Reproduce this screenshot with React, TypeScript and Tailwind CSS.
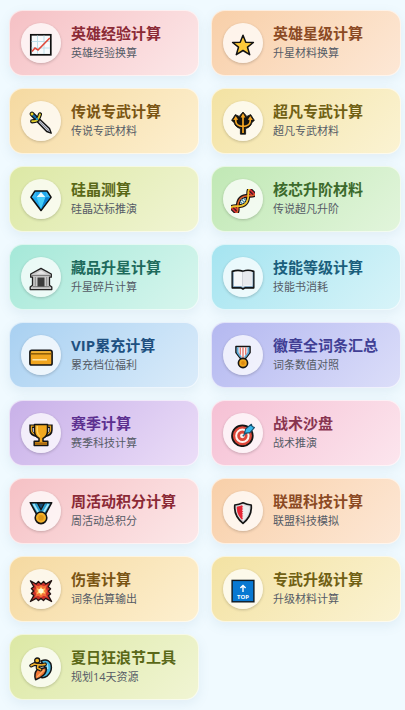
import type { ReactNode } from 'react';

const icons: Record<string, ReactNode> = {
  chart: (
    <>
      <rect x="1.8" y="1.8" width="20" height="20" fill="#f8fafc" stroke="#111" strokeWidth="1.7" />
      <path d="M8.5 2.6V21M15 2.6V21M2.6 8.5H21M2.6 15H21" stroke="#bfe0ea" strokeWidth="1" fill="none" />
      <path d="M3 18.5L6 15L9 17L20.8 5" stroke="#e0483a" strokeWidth="1.6" fill="none" />
    </>
  ),
  star: (
    <path
      d="M12 2.2L14.8 9.2L22.4 9.5L16.5 14.2L18.7 21.7L12 17.5L5.3 21.7L7.5 14.2L1.6 9.5L9.2 9.2Z"
      fill="#fcc93a" stroke="#111" strokeWidth="1.5" strokeLinejoin="round"
    />
  ),
  dagger: (
    <>
      <path d="M8 10.5L10.5 8L20.5 17.5L22.2 22.2L17.7 20.5Z" fill="#c9ccd6" stroke="#111" strokeWidth="1.4" strokeLinejoin="round" />
      <path d="M10 10.2L21 21" stroke="#898d9a" strokeWidth="1" />
      <path d="M3 3L8.5 8.5" stroke="#111" strokeWidth="4.6" strokeLinecap="round" />
      <path d="M4 4L8 8" stroke="#146aa8" strokeWidth="2.4" />
      <circle cx="3" cy="3" r="1.5" fill="#e9d52b" />
      <path d="M3.2 10.3Q8.3 10 8.5 8.3Q10 7 11 3.3" stroke="#111" strokeWidth="4.2" strokeLinecap="round" fill="none" />
      <path d="M3.2 10.3Q8.3 10 8.5 8.3Q10 7 11 3.3" stroke="#e3cf2b" strokeWidth="1.9" strokeLinecap="round" fill="none" />
      <circle cx="8" cy="8" r="1.3" fill="#2499c5" />
    </>
  ),
  trident: (
    <>
      <path
        d="M12 1L15.8 5.4L19.7 3.6L23.4 9.4L21 11.4Q20 16 14.6 17.6V23.2H9.4V17.6Q4 16 3 11.4L.6 9.4L4.3 3.6L8.2 5.4Z"
        fill="#151411" stroke="#151411" strokeWidth=".8" strokeLinejoin="round"
      />
      <path d="M12 5V22M4.8 8V10.5Q5.4 15 12 15.5Q18.6 15 19.2 10.5V8" fill="none" stroke="#f5a623" strokeWidth="1.7" />
      <path d="M12 2.2L14.4 6.4H9.6ZM4.7 5L7.2 8.8L2.2 9ZM19.3 5L21.8 9L16.8 8.8Z" fill="#f5a623" />
    </>
  ),
  diamond: (
    <>
      <path d="M6 2H18L22 8.2L12 21.5L2 8.2Z" fill="#20a9ee" stroke="#111" strokeWidth="1.6" strokeLinejoin="round" />
      <path d="M6.5 2.8L7.5 8.3L2.8 8.4ZM17.5 2.8L16.5 8.3L21.2 8.4Z" fill="#3ab9f3" />
      <path d="M12 2.9L16.5 8.3H7.5Z" fill="#e9faff" />
      <path d="M7.5 8.3H16.5L12 20Z" fill="#45cdf7" />
      <path d="M16.5 8.3H21L12 20.2Z" fill="#0b81cf" />
    </>
  ),
  dna: (
    <g transform="rotate(-45 12 12)" fill="none" strokeLinecap="round">
      <path
        d="M-1 8C3 8 5 15.6 12 15.6S21 8 25 8M-1 16C3 16 5 8.4 12 8.4S21 16 25 16M-1 8V16M25 8V16"
        stroke="#1a1414" strokeWidth="4"
      />
      <path d="M-1 8.5V15.5M1.8 9.6V14.4M25 8.5V15.5M22.2 9.6V14.4" stroke="#cf2f36" strokeWidth="1.8" />
      <path d="M9.6 9.5V14.5M12 9.2V14.8M14.4 9.5V14.5" stroke="#3f7fa3" strokeWidth="1.1" />
      <path d="M-1 16C3 16 5 8.4 12 8.4S21 16 25 16" stroke="#e2612c" strokeWidth="1.5" />
      <path d="M-1 8C3 8 5 15.6 12 15.6S21 8 25 8" stroke="#f3c52b" strokeWidth="1.8" />
    </g>
  ),
  museum: (
    <>
      <path
        d="M12 1.4L22.3 7V10.2H20.5V18.2L22.8 20V22.6H1.2V20L3.5 18.2V10.2H1.7V7Z"
        fill="#cacaca" stroke="#222" strokeWidth="1.3" strokeLinejoin="round"
      />
      <path d="M2.6 8.6H21.4M3.6 19.7H20.5" stroke="#777" strokeWidth="1" />
      <path d="M6.3 10V18.8M17.7 10V18.8" stroke="#8a8a8a" strokeWidth="1" />
      <path d="M8.5 10.5H15.5V19.5H8.5Z" fill="#3d3d3d" />
      <path d="M12 3.8L17 6.8H7Z" fill="#e9e9e9" />
    </>
  ),
  book: (
    <>
      <path
        d="M1.3 4.4Q7 2.4 12 4.3Q17 2.4 22.7 4.4V20.8H14L12 22L10 20.8H1.3Z"
        fill="#f4f6f8" stroke="#111" strokeWidth="1.7" strokeLinejoin="round"
      />
      <path d="M2.1 5V19.6H10L12 20.7L14 19.6H21.9V5" fill="none" stroke="#4a7ea6" strokeWidth=".7" />
      <path d="M12 4.8V19.4" stroke="#b8bdc5" strokeWidth="1.2" />
      <path d="M12 5Q17 3.4 21.4 5V18.6Q16 17.4 12 19Z" fill="#e7e9ed" />
    </>
  ),
  card: (
    <>
      <rect x=".9" y="5.4" width="22.2" height="14.6" rx="1.8" fill="#f0a51f" stroke="#151515" strokeWidth="1.6" />
      <path d="M1.6 8.8H22.4" stroke="#8a5c0a" strokeWidth="1.5" />
      <path d="M3.4 14.8H18" stroke="#ffe9b2" strokeWidth="1.4" />
      <path d="M2.4 6.9H21.6" stroke="#ffc84c" strokeWidth="1" />
    </>
  ),
  ribbon: (
    <>
      <path d="M5 1.5H19V7.4L14.4 13.6H9.6L5 7.4Z" fill="#f7f8fc" stroke="#151515" strokeWidth="1.6" strokeLinejoin="round" />
      <path d="M6.6 2.3V7.6L10 12.3M17.4 2.3V7.6L14 12.3" stroke="#5aa9d8" strokeWidth="1.8" fill="none" />
      <path d="M9.3 2.3V9.8M12 2.3V12.4M14.7 2.3V9.8" stroke="#e47b70" strokeWidth="1.4" />
      <circle cx="12" cy="18" r="4.6" fill="#f0a71e" stroke="#151515" strokeWidth="1.6" />
      <circle cx="12" cy="18" r="1.9" fill="#dd8a10" />
    </>
  ),
  trophy: (
    <>
      <path d="M6 3.2H2V7Q2 11.6 8 12.6M18 3.2H22V7Q22 11.6 16 12.6" fill="none" stroke="#151515" strokeWidth="3.4" />
      <path d="M6 3.2H2.4V7Q2.6 11 8 11.8M18 3.2H21.6V7Q21.4 11 16 11.8" fill="none" stroke="#e9a51f" strokeWidth="1.2" />
      <path
        d="M5.5 1.6H18.5V8Q18.5 13.2 14 15.4V18.3H18.8V22.5H5.2V18.3H10V15.4Q5.5 13.2 5.5 8Z"
        fill="#f2a820" stroke="#151515" strokeWidth="1.5" strokeLinejoin="round"
      />
      <path d="M8.2 3V8Q8.4 11.5 11 13.5" stroke="#ffd360" strokeWidth="1.5" fill="none" />
      <path d="M6 19.4H18V21.8H6Z" fill="#a86a12" />
    </>
  ),
  target: (
    <>
      <circle cx="11.4" cy="12.8" r="10.4" fill="#dd4639" stroke="#151515" strokeWidth="1.7" />
      <circle cx="11.4" cy="12.8" r="6.2" fill="#dd4639" stroke="#fff2ed" strokeWidth="2" />
      <circle cx="11.4" cy="12.8" r="2.4" fill="#fff2ed" />
      <path d="M11.8 13.2L17 7.8" stroke="#27678c" strokeWidth="1.6" />
      <path d="M13.4 10.4L14.8 5.7L20.4 1.3L21.2 3.6L23.4 4.6L19 9.6Z" fill="#38b9ed" stroke="#174d68" strokeWidth="1.1" strokeLinejoin="round" />
    </>
  ),
  medal: (
    <>
      <path d="M1.3 1.7H22.7L16 14H8Z" fill="#2b9ccf" stroke="#151515" strokeWidth="1.6" strokeLinejoin="round" />
      <path d="M4.5 3L10.4 13M19.5 3L13.6 13" stroke="#a4e8fa" strokeWidth="1.8" />
      <path d="M8.5 2.2H15.5L12 8.8Z" fill="#164c75" stroke="#151515" strokeWidth="1.2" />
      <circle cx="12" cy="16.8" r="5.8" fill="#f3b028" stroke="#151515" strokeWidth="1.6" />
      <circle cx="12" cy="16.8" r="2.8" fill="#de9616" />
    </>
  ),
  shield: (
    <>
      <path
        d="M12 1.8Q16 3.6 20.2 4Q21.3 15 12 22.3Q2.7 15 3.8 4Q8 3.6 12 1.8Z"
        fill="#d9dcdf" stroke="#151515" strokeWidth="1.7" strokeLinejoin="round"
      />
      <path d="M11.8 4Q9 5.3 5.8 5.7Q5.4 13.8 11.8 19.5Z" fill="#e52535" />
      <path d="M12 4V19.8" stroke="#fff" strokeWidth="1.2" strokeDasharray="1.3 1" />
      <path d="M12.6 4.3Q15.5 5.5 18 5.8Q18.3 13.6 12.6 19Z" fill="#eceeef" />
    </>
  ),
  blast: (
    <>
      <path
        d="M1.4 1.8L7.2 5L9.4 2.4L12 5L14.6 2.4L16.8 5L22.6 1.6L19.2 7.8L21.6 9.8L19.4 12.2L21.6 15L19.4 16.6L22.6 22.5L16.6 19.4L14.5 21.6L12 19.4L9.4 21.6L7.2 19.4L1.4 22.5L4.8 16.6L2.4 14.5L4.6 12L2.4 9.6L4.8 7.8Z"
        fill="#c92f29" stroke="#211312" strokeWidth="1.3" strokeLinejoin="round"
      />
      <path d="M6 6L9.2 7.3L12 6L15 7.2L18 6L16.8 9.5L18 12.2L16.8 15L18 18L14.7 16.8L12 18.5L9 16.8L6 18L7.2 15L6 12.2L7.2 9Z" fill="#f46d36" />
      <path d="M12 7.5L13.4 10.2L16.3 9.2L15 12L16.5 14.8L13.6 14L12 16.5L10.4 14L7.6 15L9 12.2L7.8 9.3L10.7 10.2Z" fill="#ffd66d" />
      <circle cx="12" cy="12" r="2.4" fill="#fff7d6" />
    </>
  ),
  top: (
    <>
      <rect x="1.1" y="1.4" width="21.8" height="21.4" fill="#0878d2" stroke="#101820" strokeWidth="1.4" />
      <path d="M12 13V6.6M9.4 9L12 6.4L14.6 9" stroke="#fff" strokeWidth="1.4" fill="none" />
      <text x="12" y="20" textAnchor="middle" fill="#fff" fontSize="6" fontWeight="700">TOP</text>
    </>
  ),
  surf: (
    <>
      <path d="M12 4Q18.5 1 21.7 6.5Q24 13.5 18.4 18.8Q14 22 11 20L17 12Z" fill="#43b6e2" stroke="#151515" strokeWidth="1.5" strokeLinejoin="round" />
      <path d="M15 6Q19.3 6.3 18.6 12" stroke="#a6e3f5" strokeWidth="1.6" fill="none" />
      <path d="M17 10.5Q19 17.6 6.6 22.8Q4.5 17 8.2 12.5Z" fill="#f17735" stroke="#151515" strokeWidth="1.5" strokeLinejoin="round" />
      <path d="M8 20L15.2 13" stroke="#ffaf69" strokeWidth="1.3" />
      <path d="M2.2 8.6L5.5 7L13 8L16 7.3M9 8L8.6 11L11.5 12.5" stroke="#151515" strokeWidth="3.8" strokeLinecap="round" strokeLinejoin="round" fill="none" />
      <path d="M2.2 8.6L5.5 7L13 8L16 7.3M9 8L8.6 11L11.5 12.5" stroke="#f0b02c" strokeWidth="1.7" strokeLinecap="round" strokeLinejoin="round" fill="none" />
      <circle cx="8.2" cy="3.5" r="2.5" fill="#f3b828" stroke="#151515" strokeWidth="1.3" />
    </>
  ),
};

const themes = {
  rose: { card: 'from-[#f5c0c4] to-[#fce8e9]', title: 'text-[#8b2a36]' },
  orange: { card: 'from-[#f8cfa8] to-[#fde8d6]', title: 'text-[#8b4a24]' },
  amber: { card: 'from-[#f5d9a0] to-[#fdf0d0]', title: 'text-[#7a5514]' },
  yellow: { card: 'from-[#f3e2a2] to-[#fbf3d3]', title: 'text-[#706014]' },
  lime: { card: 'from-[#dce8a4] to-[#f1f5d4]', title: 'text-[#5a6818]' },
  green: { card: 'from-[#c0e8b4] to-[#e2f5dc]', title: 'text-[#3c6a2c]' },
  teal: { card: 'from-[#a4e8d8] to-[#d8f6ee]', title: 'text-[#1e6b5c]' },
  cyan: { card: 'from-[#a4e4f0] to-[#d8f4f9]', title: 'text-[#1b5f7c]' },
  blue: { card: 'from-[#a8d0f1] to-[#dbecfa]', title: 'text-[#205080]' },
  indigo: { card: 'from-[#b4b8f0] to-[#dcdef9]', title: 'text-[#403e94]' },
  purple: { card: 'from-[#c8b0e8] to-[#ecdef8]', title: 'text-[#5c3090]' },
  pink: { card: 'from-[#f5c0d4] to-[#fce6ee]', title: 'text-[#883450]' },
};

type Tool = { title: string; desc: string; icon: string; theme: keyof typeof themes };

const tools: Tool[] = [
  { title: '英雄经验计算', desc: '英雄经验换算', icon: 'chart', theme: 'rose' },
  { title: '英雄星级计算', desc: '升星材料换算', icon: 'star', theme: 'orange' },
  { title: '传说专武计算', desc: '传说专武材料', icon: 'dagger', theme: 'amber' },
  { title: '超凡专武计算', desc: '超凡专武材料', icon: 'trident', theme: 'yellow' },
  { title: '硅晶测算', desc: '硅晶达标推演', icon: 'diamond', theme: 'lime' },
  { title: '核芯升阶材料', desc: '传说超凡升阶', icon: 'dna', theme: 'green' },
  { title: '藏品升星计算', desc: '升星碎片计算', icon: 'museum', theme: 'teal' },
  { title: '技能等级计算', desc: '技能书消耗', icon: 'book', theme: 'cyan' },
  { title: 'VIP累充计算', desc: '累充档位福利', icon: 'card', theme: 'blue' },
  { title: '徽章全词条汇总', desc: '词条数值对照', icon: 'ribbon', theme: 'indigo' },
  { title: '赛季计算', desc: '赛季科技计算', icon: 'trophy', theme: 'purple' },
  { title: '战术沙盘', desc: '战术推演', icon: 'target', theme: 'pink' },
  { title: '周活动积分计算', desc: '周活动总积分', icon: 'medal', theme: 'rose' },
  { title: '联盟科技计算', desc: '联盟科技模拟', icon: 'shield', theme: 'orange' },
  { title: '伤害计算', desc: '词条估算输出', icon: 'blast', theme: 'amber' },
  { title: '专武升级计算', desc: '升级材料计算', icon: 'top', theme: 'yellow' },
  { title: '夏日狂浪节工具', desc: '规划14天资源', icon: 'surf', theme: 'lime' },
];

function ToolCard({ tool }: { tool: Tool }) {
  const theme = themes[tool.theme];
  return (
    <a
      href={`#${tool.icon}`}
      className={`flex items-center gap-2.5 rounded-[14px] border border-white/60 bg-linear-135 bg-origin-border px-[11px] py-3 shadow-[0_4px_12px_rgba(90,130,160,0.10)] transition-transform active:scale-[0.98] ${theme.card}`}
    >
      <span className="flex h-10 w-10 shrink-0 items-center justify-center rounded-full bg-white/75 pt-1 shadow-[0_1px_3px_rgba(0,0,0,0.2)]">
        <svg viewBox="0 0 24 24" className="h-6 w-6" aria-hidden="true">
          {icons[tool.icon]}
        </svg>
      </span>
      <span className="flex min-w-0 flex-col gap-0.5">
        <span className={`text-[15px] leading-[18px] font-bold whitespace-nowrap ${theme.title}`}>{tool.title}</span>
        <span className="text-[11px] leading-[18px] whitespace-nowrap text-[#555b66]">{tool.desc}</span>
      </span>
    </a>
  );
}

export default function App() {
  return (
    <main className="min-h-screen bg-[#f0faff] py-2.5 pr-1 pl-[9px] font-['Open_Sans','Noto_Sans_CJK_SC',sans-serif]">
      <nav className="grid grid-cols-2 gap-3" aria-label="工具">
        {tools.map((tool) => (
          <ToolCard key={tool.title} tool={tool} />
        ))}
      </nav>
    </main>
  );
}
